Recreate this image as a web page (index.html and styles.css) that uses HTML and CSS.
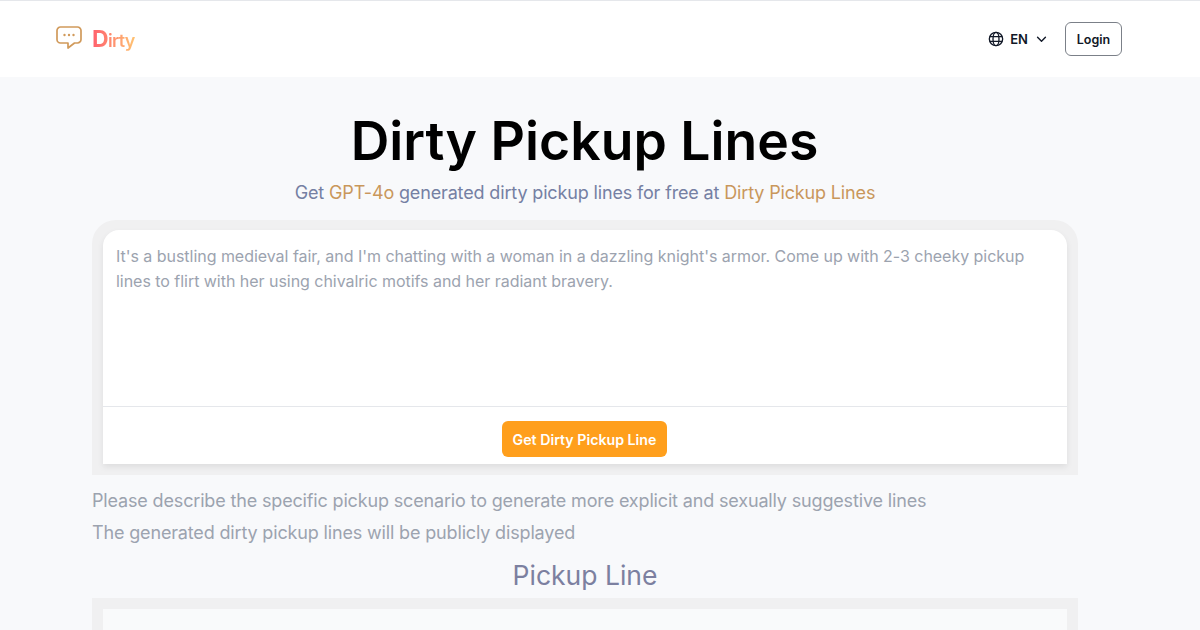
FILE: index.html
```html
<!DOCTYPE html>
<html lang="en">
<head>
<meta charset="utf-8">
<title>Dirty Pickup Lines</title>
<link rel="stylesheet" href="styles.css">
</head>
<body>
<header class="nav">
  <a class="brand">
    <svg class="brand-icon" viewBox="0 0 26 24" fill="none" stroke="#d19a5b" stroke-width="1.7" stroke-linejoin="round">
      <path d="M4.500 1h17a3.500 3.500 0 0 1 3.500 3.500v9a3.500 3.500 0 0 1-3.500 3.500h-3l-6.500 5v-5H4.500A3.500 3.500 0 0 1 1 13.500v-9A3.500 3.500 0 0 1 4.500 1z"/>
      <circle cx="8.500" cy="9" r="1.200" fill="#d19a5b" stroke="none"/>
      <circle cx="13" cy="9" r="1.200" fill="#d19a5b" stroke="none"/>
      <circle cx="17.500" cy="9" r="1.200" fill="#d19a5b" stroke="none"/>
    </svg>
    <span class="brand-name"><span class="brand-first">D</span>irty</span>
  </a>
  <div class="nav-right">
    <div class="lang">
      <svg class="globe" viewBox="0 0 24 24" fill="none" stroke="#111827" stroke-width="2">
        <circle cx="12" cy="12" r="10"/>
        <ellipse cx="12" cy="12" rx="4.500" ry="10"/>
        <path d="M2.800 8.500h18.400M2.800 15.500h18.400"/>
      </svg>
      <span>EN</span>
      <svg class="chev" viewBox="0 0 12 8" fill="none" stroke="#111827" stroke-width="1.600" stroke-linecap="round" stroke-linejoin="round">
        <path d="M1.500 1.500 6 6l4.500-4.500"/>
      </svg>
    </div>
    <button class="login">Login</button>
  </div>
</header>
<main class="main">
  <h1 class="title">Dirty Pickup Lines</h1>
  <p class="subtitle">Get <span class="accent">GPT-4o</span> generated dirty pickup lines for free at <span class="accent">Dirty Pickup Lines</span></p>
  <section class="panel panel-top">
    <div class="card">
      <div class="prompt">It's a bustling medieval fair, and I'm chatting with a woman in a dazzling knight's armor. Come up with 2-3 cheeky pickup lines to flirt with her using chivalric motifs and her radiant bravery.</div>
      <div class="actions"><button class="cta">Get Dirty Pickup Line</button></div>
    </div>
  </section>
  <div class="notes">
    <p>Please describe the specific pickup scenario to generate more explicit and sexually suggestive lines</p>
    <p>The generated dirty pickup lines will be publicly displayed</p>
  </div>
  <h2 class="section-title">Pickup Line</h2>
  <section class="panel panel-bottom"><div class="result"></div></section>
</main>
</body>
</html>
```
FILE: styles.css
```css
* { box-sizing: border-box; }
html, body { height: 630px; overflow: hidden; }
body {
  margin: 0;
  background: #f8f9fb;
  font-family: Inter, "Liberation Sans", sans-serif;
}
.nav {
  height: 77px;
  background: #fff;
  border-top: 1px solid #e5e7eb;
  display: flex;
  align-items: center;
  justify-content: space-between;
  padding: 0 78px 0 56px;
}
.brand { display: flex; align-items: center; gap: 10px; }
.brand-icon { width: 26px; height: 24px; margin-top: -2px; }
.brand-name {
  font-size: 18px;
  font-weight: 600;
  letter-spacing: -0.7px;
  background: linear-gradient(90deg, #ff5f6d, #ffc371);
  -webkit-background-clip: text;
  background-clip: text;
  color: transparent;
}
.brand-first { font-size: 23px; font-weight: 700; }
.nav-right { display: flex; align-items: center; }
.lang {
  display: flex;
  align-items: center;
  font-size: 13px;
  font-weight: 600;
  color: #111827;
  margin-right: 18px;
}
.globe { width: 16px; height: 16px; margin-right: 6px; }
.chev { width: 11px; height: 7px; margin-left: 8px; }
.login {
  width: 57px;
  height: 34px;
  padding: 0;
  background: #fff;
  border: 1px solid #7b8088;
  border-radius: 6px;
  font: 600 12.500px Inter, "Liberation Sans", sans-serif;
  color: #111827;
}
.main { padding: 0 122px 0 92px; }
.title {
  margin: 32px 1px 0 0;
  font-size: 53.500px;
  line-height: 64px;
  font-weight: 600;
  color: #000;
  text-align: center;
}
.subtitle {
  margin: 6px 0 0;
  font-size: 18px;
  letter-spacing: -0.15px;
  line-height: 28px;
  color: #7580a3;
  text-align: center;
}
.accent { color: #c9975b; }
.panel {
  margin-top: 13px;
  padding: 11px 11px 0;
  background: #f0f0f1;
}
.panel-top {
  height: 255px;
  border-radius: 24px 24px 0 0;
  padding-top: 10px;
}
.card {
  height: 234px;
  background: #fff;
  border-radius: 16px 16px 0 0;
  box-shadow: 0 3px 6px rgba(0, 0, 0, .08);
  display: flex;
  flex-direction: column;
}
.prompt {
  height: 177px;
  padding: 13.500px 13px 13px;
  font-size: 16px;
  letter-spacing: -0.035px;
  line-height: 25px;
  color: #9ca3af;
  border-bottom: 1px solid #e5e7eb;
}
.actions { flex: 1; display: flex; justify-content: center; padding: 14px 1px 0 0; }
.cta {
  width: 165px;
  height: 36px;
  padding: 0;
  background: #ff9f1c;
  border: 0;
  border-radius: 6px;
  color: #fff;
  font: 600 14.200px Inter, "Liberation Sans", sans-serif;
}
.notes {
  margin-top: 10px;
  font-size: 18px;
  letter-spacing: -0.157px;
  line-height: 32px;
  color: #9ca3af;
}
.notes p { margin: 0; }
.section-title {
  margin: 8px 0 0;
  font-size: 26.500px;
  line-height: 36px;
  font-weight: 400;
  color: #7c80a0;
  text-align: center;
}
.panel-bottom { margin-top: 5px; height: 32px; }
.result { height: 100px; background: #f9fafb; }
```
